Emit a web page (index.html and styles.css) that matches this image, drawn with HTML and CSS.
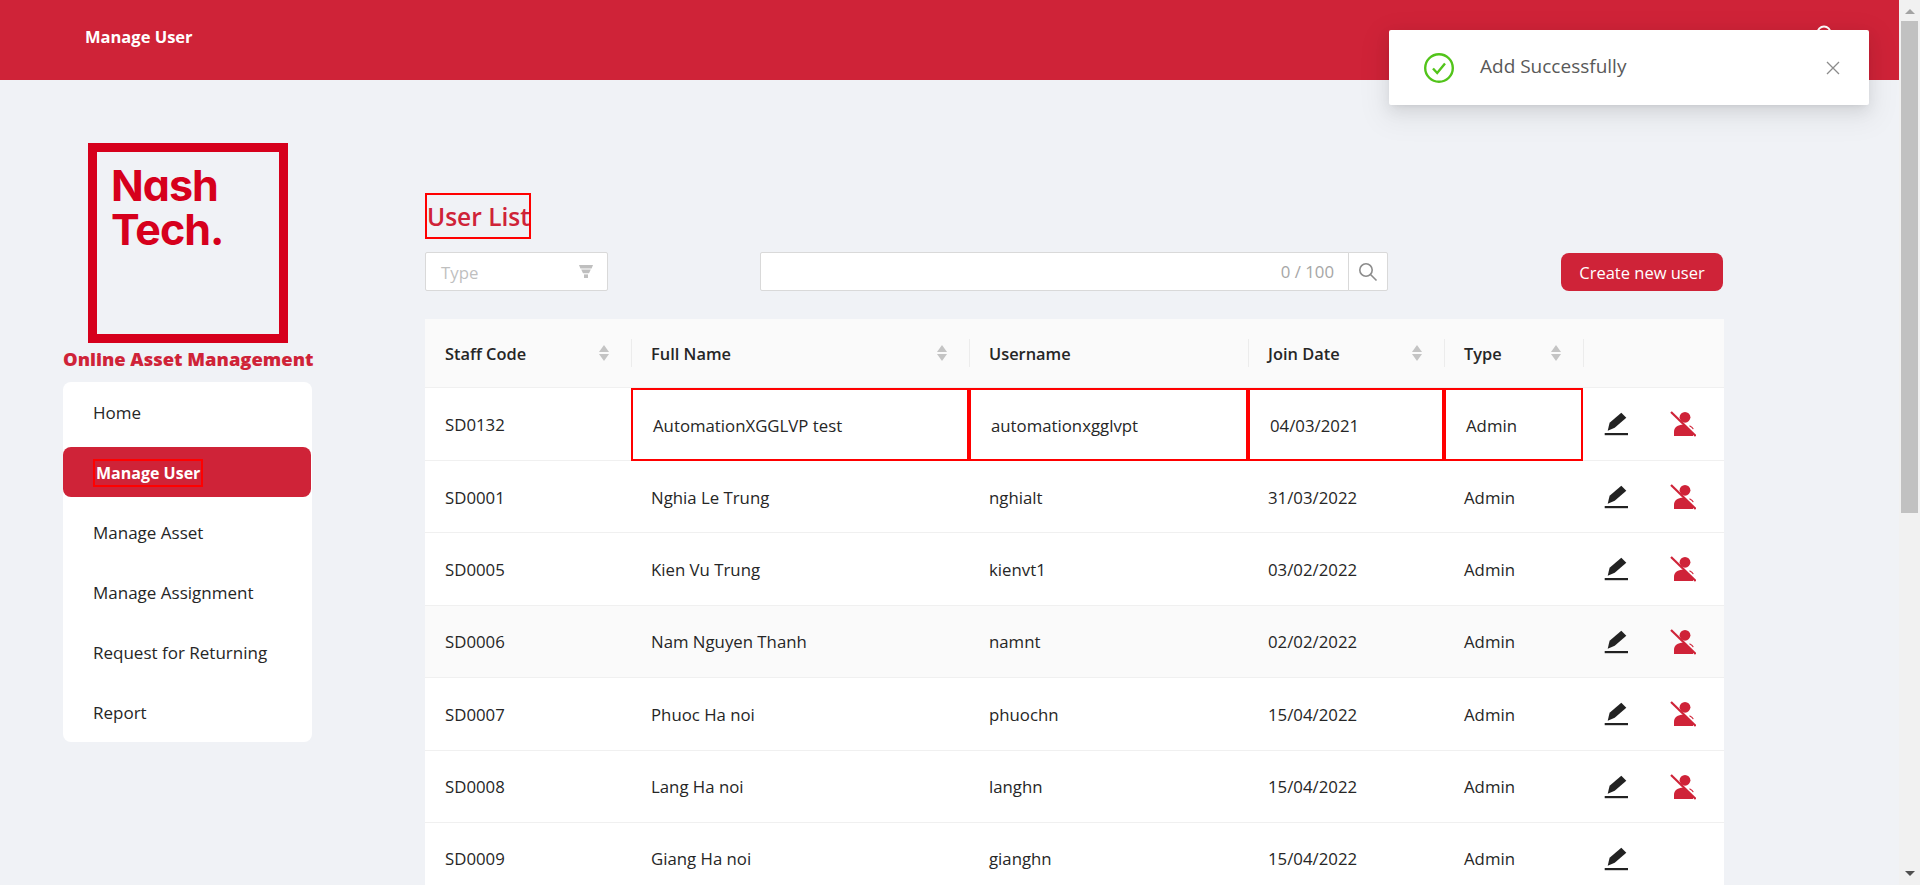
FILE: index.html
```html
<!DOCTYPE html>
<html lang="en">
<head>
    <meta charset="UTF-8">
    <meta name="viewport" content="width=device-width, initial-scale=1.0">
    <title>Manage User</title>
    <link rel="stylesheet" href="styles.css">
</head>
<body>
    <svg class="icon-defs" width="0" height="0">
        <symbol id="icon-edit" viewBox="0 0 24 24">
            <path d="M3.700 18.700 5.600 10.700 17.300.7 22.300 5.700 10.700 15.700Z"/>
            <rect x=".7" y="21" width="23.300" height="2.200"/>
        </symbol>
        <symbol id="icon-disable" viewBox="0 0 26 26">
            <circle cx="15" cy="6.300" r="5.400"/>
            <path d="M4 25v-4.500c0-4 4-6.700 9-6.700h1L23 23v2Z"/>
            <path class="fleck" d="M19.500 14.700c1.800.8 3.300 2 3.800 3.500"/>
            <path class="slash" d="M1 1 25.700 25"/>
        </symbol>
    </svg>

    <div class="page">
        <header class="topbar">
            <span class="topbar-title">Manage User</span>
            <svg class="topbar-user" width="16" height="16" viewBox="0 0 16 16">
                <circle cx="8" cy="8" r="6.500"/>
            </svg>
        </header>

        <div class="content">
            <aside class="sidebar">
                <div class="logo">
                    <span class="logo-text">Nash<br>Tech.</span>
                </div>
                <div class="app-name">Online Asset Management</div>
                <nav class="menu">
                    <a class="menu-item">Home</a>
                    <a class="menu-item menu-item-active"><span class="marked">Manage User</span></a>
                    <a class="menu-item">Manage Asset</a>
                    <a class="menu-item">Manage Assignment</a>
                    <a class="menu-item">Request for Returning</a>
                    <a class="menu-item">Report</a>
                </nav>
            </aside>

            <main class="main">
                <h1 class="page-title">User List</h1>

                <div class="toolbar">
                    <div class="filter">
                        <span>Type</span>
                        <svg class="filter-icon" width="14" height="13" viewBox="0 0 14 13">
                            <path d="M0 0h14l-1.400 3.400H1.400Z"/>
                            <path d="M2.200 4.600h9.600L10 8.200H4Z"/>
                            <path d="M5 9.400h4V13H5Z"/>
                        </svg>
                    </div>
                    <div class="search">
                        <div class="search-input">0 / 100</div>
                        <button class="search-btn">
                            <svg width="20" height="20" viewBox="0 0 20 20">
                                <circle cx="8" cy="8" r="6.200"/>
                                <path d="M12.500 12.500 18.500 18.500"/>
                            </svg>
                        </button>
                    </div>
                    <button class="btn-create">Create new user</button>
                </div>

                <table class="user-table">
                    <colgroup>
                        <col class="col-code"><col class="col-name"><col class="col-user">
                        <col class="col-date"><col class="col-type"><col class="col-actions">
                    </colgroup>
                    <thead>
                        <tr>
                            <th><div class="th-inner">Staff Code <i class="sorter"></i></div></th>
                            <th><div class="th-inner">Full Name <i class="sorter"></i></div></th>
                            <th><div class="th-inner">Username</div></th>
                            <th><div class="th-inner">Join Date <i class="sorter"></i></div></th>
                            <th><div class="th-inner">Type <i class="sorter"></i></div></th>
                            <th></th>
                        </tr>
                    </thead>
                    <tbody>
                        <tr class="row-marked">
                            <td>SD0132</td>
                            <td class="marked-cell">AutomationXGGLVP test</td>
                            <td class="marked-cell">automationxgglvpt</td>
                            <td class="marked-cell">04/03/2021</td>
                            <td class="marked-cell">Admin</td>
                            <td class="actions">
                                <svg class="icon-edit"><use href="#icon-edit"/></svg>
                                <svg class="icon-disable"><use href="#icon-disable"/></svg>
                            </td>
                        </tr>
                        <tr>
                            <td>SD0001</td><td>Nghia Le Trung</td><td>nghialt</td><td>31/03/2022</td><td>Admin</td>
                            <td class="actions">
                                <svg class="icon-edit"><use href="#icon-edit"/></svg>
                                <svg class="icon-disable"><use href="#icon-disable"/></svg>
                            </td>
                        </tr>
                        <tr>
                            <td>SD0005</td><td>Kien Vu Trung</td><td>kienvt1</td><td>03/02/2022</td><td>Admin</td>
                            <td class="actions">
                                <svg class="icon-edit"><use href="#icon-edit"/></svg>
                                <svg class="icon-disable"><use href="#icon-disable"/></svg>
                            </td>
                        </tr>
                        <tr class="row-hover">
                            <td>SD0006</td><td>Nam Nguyen Thanh</td><td>namnt</td><td>02/02/2022</td><td>Admin</td>
                            <td class="actions">
                                <svg class="icon-edit"><use href="#icon-edit"/></svg>
                                <svg class="icon-disable"><use href="#icon-disable"/></svg>
                            </td>
                        </tr>
                        <tr>
                            <td>SD0007</td><td>Phuoc Ha noi</td><td>phuochn</td><td>15/04/2022</td><td>Admin</td>
                            <td class="actions">
                                <svg class="icon-edit"><use href="#icon-edit"/></svg>
                                <svg class="icon-disable"><use href="#icon-disable"/></svg>
                            </td>
                        </tr>
                        <tr>
                            <td>SD0008</td><td>Lang Ha noi</td><td>langhn</td><td>15/04/2022</td><td>Admin</td>
                            <td class="actions">
                                <svg class="icon-edit"><use href="#icon-edit"/></svg>
                                <svg class="icon-disable"><use href="#icon-disable"/></svg>
                            </td>
                        </tr>
                        <tr class="row-short">
                            <td>SD0009</td><td>Giang Ha noi</td><td>gianghn</td><td>15/04/2022</td><td>Admin</td>
                            <td class="actions">
                                <svg class="icon-edit"><use href="#icon-edit"/></svg>
                            </td>
                        </tr>
                    </tbody>
                </table>
            </main>
        </div>

        <div class="toast">
            <svg class="toast-icon" width="30" height="30" viewBox="0 0 30 30">
                <circle cx="15" cy="15" r="13.800"/>
                <path d="M9 15.500 13.200 20 21 10.500"/>
            </svg>
            <span class="toast-text">Add Successfully</span>
            <svg class="toast-close" width="14" height="14" viewBox="0 0 14 14">
                <path d="M1 1 13 13M13 1 1 13"/>
            </svg>
        </div>
    </div>

    <div class="scrollbar">
        <i class="scroll-up"></i>
        <div class="scroll-thumb"></div>
        <i class="scroll-down"></i>
    </div>
</body>
</html>
```

FILE: styles.css
```css
* {
    margin: 0;
    padding: 0;
    box-sizing: border-box;
}

html, body {
    height: 100%;
    overflow: hidden;
}

body {
    display: flex;
    font-family: "Open Sans", "Noto Sans", sans-serif;
    font-size: 16.800px;
    color: #262626;
    background: #f0f2f6;
}

.icon-defs {
    position: absolute;
}

.page {
    position: relative;
    flex: 1;
    min-width: 0;
    overflow: hidden;
}

/* top bar */
.topbar {
    height: 80px;
    background: #cf2338;
    display: flex;
    align-items: flex-start;
    justify-content: space-between;
    padding: 25px 67px 0 85px;
}

.topbar-title {
    color: #fff;
    font-size: 16.500px;
    font-weight: 700;
    line-height: 24px;
}

.topbar-user {
    fill: none;
    stroke: #fff;
    stroke-width: 2;
}

.content {
    display: flex;
}

/* sidebar */
.sidebar {
    width: 249px;
    margin-left: 63px;
    padding-top: 63px;
}

.logo {
    width: 200px;
    height: 200px;
    margin-left: 25px;
    border: 9px solid #d6001c;
    padding: 11px 0 0 14px;
}

.logo-text {
    display: block;
    color: #d6001c;
    font-family: "Inter", sans-serif;
    font-feature-settings: "cv11";
    font-size: 43px;
    font-weight: 700;
    line-height: 44px;
    letter-spacing: -1px;
}

.app-name {
    margin-top: 3px;
    height: 36px;
    color: #cf2338;
    font-size: 18.400px;
    font-weight: 800;
    line-height: 26px;
    text-align: center;
    white-space: nowrap;
}

.menu {
    background: #fff;
    border-radius: 8px;
    padding: 5px 0;
    display: flex;
    flex-direction: column;
    gap: 10px;
}

.menu-item {
    height: 50px;
    padding-left: 30px;
    font-size: 17px;
    font-weight: 500;
    line-height: 52px;
    margin-right: 1px;
}

.menu-item-active {
    background: #cf2338;
    border-radius: 8px;
    color: #fff;
    font-size: 16px;
    font-weight: 700;
}

.marked {
    display: inline-block;
    border: 2px solid #f00;
    line-height: 24px;
    padding: 0 1px;
}

/* main area */
.main {
    width: 1299px;
    margin-left: 113px;
    padding-top: 113px;
}

.page-title {
    width: 106px;
    height: 46px;
    border: 2px solid #f00;
    color: #cf2338;
    font-size: 24.500px;
    font-weight: 600;
    line-height: 43px;
    white-space: nowrap;
}

.toolbar {
    display: flex;
    margin-top: 13px;
    height: 39px;
}

.filter {
    width: 183px;
    display: flex;
    align-items: center;
    justify-content: space-between;
    background: #fff;
    border: 1px solid #d9d9d9;
    border-radius: 2px;
    padding: 2px 14px 0 15px;
    color: #bfbfbf;
}

.filter-icon {
    fill: #bfbfbf;
    margin-top: -2px;
}

.search {
    display: flex;
    width: 628px;
    margin-left: 152px;
}

.search-input {
    flex: 1;
    background: #fff;
    border: 1px solid #d9d9d9;
    border-radius: 2px 0 0 2px;
    padding-right: 14px;
    color: #a6a6a6;
    line-height: 37px;
    text-align: right;
}

.search-btn {
    width: 40px;
    margin-left: -1px;
    background: #fff;
    border: 1px solid #d9d9d9;
    border-radius: 0 2px 2px 0;
    display: flex;
    align-items: center;
    justify-content: center;
}

.search-btn svg {
    fill: none;
    stroke: #8c8c8c;
    stroke-width: 1.600;
}

.btn-create {
    width: 162px;
    height: 38px;
    margin: 1px 1px 0 auto;
    border: none;
    border-radius: 8px;
    background: #cf2338;
    color: #fff;
    font-family: inherit;
    font-size: 16.500px;
}

/* table */
.user-table {
    width: 100%;
    margin-top: 28px;
    border-collapse: separate;
    border-spacing: 0;
    table-layout: fixed;
    background: #fff;
}

.col-code { width: 206px; }
.col-name { width: 338px; }
.col-user { width: 279px; }
.col-date { width: 196px; }
.col-type { width: 139px; }
.col-actions { width: 141px; }

.user-table th {
    height: 69px;
    background: #fafafa;
    border-bottom: 1px solid #f0f0f0;
    font-size: 16.400px;
    font-weight: 600;
    text-align: left;
    padding: 0 20px;
    position: relative;
}

.user-table th + th::before {
    content: "";
    position: absolute;
    left: 0;
    top: 20px;
    width: 1px;
    height: 28px;
    background: #ececec;
}

.th-inner {
    display: flex;
    align-items: center;
    justify-content: space-between;
}

.sorter {
    display: block;
    width: 12px;
    height: 16px;
    margin-right: 1px;
    position: relative;
}

.sorter::before,
.sorter::after {
    content: "";
    position: absolute;
    left: 1px;
    border-left: 5px solid transparent;
    border-right: 5px solid transparent;
}

.sorter::before {
    top: 0;
    border-bottom: 7px solid #c4c4c4;
}

.sorter::after {
    bottom: 0;
    border-top: 7px solid #c4c4c4;
}

.user-table td {
    height: 72.400px;
    padding: 1px 20px 0;
    border-bottom: 1px solid #f0f0f0;
    white-space: nowrap;
}

.row-marked td {
    height: 73px;
}

.user-table .marked-cell {
    border: 2px solid #f00;
}

.row-hover td {
    background: #fafafa;
}

.row-short td {
    padding-top: 0;
}

.user-table .actions {
    padding: 0 0 0 21px;
}

.icon-edit {
    width: 24px;
    height: 24px;
    fill: #222;
    vertical-align: middle;
}

.icon-disable {
    width: 26px;
    height: 26px;
    margin-left: 38px;
    fill: #cf2338;
    vertical-align: middle;
}

.slash {
    fill: none;
    stroke: #cf2338;
    stroke-width: 2.200;
}

.fleck {
    fill: none;
    stroke: #cf2338;
    stroke-width: 1.100;
}

/* notification */
.toast {
    position: absolute;
    top: 30px;
    left: 1389px;
    width: 480px;
    height: 75px;
    display: flex;
    align-items: center;
    background: #fff;
    border-radius: 2px;
    box-shadow: 0 3px 6px -4px rgba(0, 0, 0, .12), 0 6px 16px rgba(0, 0, 0, .08), 0 9px 28px 8px rgba(0, 0, 0, .05);
    padding-left: 35px;
}

.toast-icon {
    fill: none;
    stroke: #52c41a;
    stroke-width: 2.400;
}

.toast-text {
    margin: -3px 0 0 26px;
    color: #595959;
    font-size: 19px;
}

.toast-close {
    margin-left: auto;
    margin-right: 29px;
    fill: none;
    stroke: #8c8c8c;
    stroke-width: 1.300;
}

/* scrollbar on the right */
.scrollbar {
    width: 21px;
    background: #f1f1f1;
    position: relative;
}

.scroll-thumb {
    position: absolute;
    top: 21px;
    left: 2px;
    width: 17px;
    height: 492px;
    background: #c1c1c1;
}

.scroll-up,
.scroll-down {
    position: absolute;
    left: 6px;
    border-left: 5px solid transparent;
    border-right: 5px solid transparent;
}

.scroll-up {
    top: 9px;
    border-bottom: 5px solid #a3a3a3;
}

.scroll-down {
    bottom: 9px;
    border-top: 5px solid #505050;
}
```
